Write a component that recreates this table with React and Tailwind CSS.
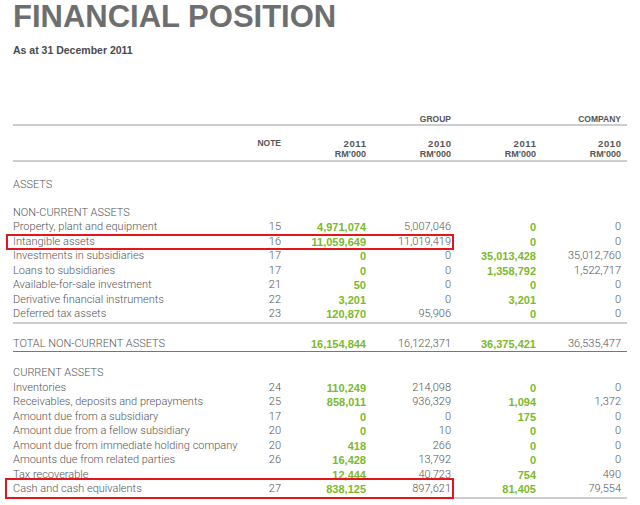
import React from "react";

const nonCurrent = [
  { label: "Property, plant and equipment", note: "15", g11: "4,971,074", g10: "5,007,046", c11: "0", c10: "0" },
  { label: "Intangible assets", note: "16", g11: "11,059,649", g10: "11,019,419", c11: "0", c10: "0", mark: "small" },
  { label: "Investments in subsidiaries", note: "17", g11: "0", g10: "0", c11: "35,013,428", c10: "35,012,760" },
  { label: "Loans to subsidiaries", note: "17", g11: "0", g10: "0", c11: "1,358,792", c10: "1,522,717" },
  { label: "Available-for-sale investment", note: "21", g11: "50", g10: "0", c11: "0", c10: "0" },
  { label: "Derivative financial instruments", note: "22", g11: "3,201", g10: "0", c11: "3,201", c10: "0" },
  { label: "Deferred tax assets", note: "23", g11: "120,870", g10: "95,906", c11: "0", c10: "0" },
];

const current = [
  { label: "Inventories", note: "24", g11: "110,249", g10: "214,098", c11: "0", c10: "0" },
  { label: "Receivables, deposits and prepayments", note: "25", g11: "858,011", g10: "936,329", c11: "1,094", c10: "1,372" },
  { label: "Amount due from a subsidiary", note: "17", g11: "0", g10: "0", c11: "175", c10: "0" },
  { label: "Amount due from a fellow subsidiary", note: "20", g11: "0", g10: "10", c11: "0", c10: "0" },
  { label: "Amount due from immediate holding company", note: "20", g11: "418", g10: "266", c11: "0", c10: "0" },
  { label: "Amounts due from related parties", note: "26", g11: "16,428", g10: "13,792", c11: "0", c10: "0" },
  { label: "Tax recoverable", note: "", g11: "12,444", g10: "40,723", c11: "754", c10: "490" },
  { label: "Cash and cash equivalents", note: "27", g11: "838,125", g10: "897,621", c11: "81,405", c10: "79,554", mark: "big" },
];

const grid = "grid grid-cols-[1fr_30px_85px_85px_85px_85px] pr-[6px]";

function Row({ r }) {
  return (
    <div className={`${grid} relative h-[14.5px] leading-[14.5px] text-[11px]`}>
      <span className="font-light text-[#555]">{r.label}</span>
      <span className="text-right font-light text-[#555]">{r.note}</span>
      <span className="text-right font-bold text-[#7cb92c] font-['Liberation_Sans']">{r.g11}</span>
      <span className="text-right font-light text-[#555]">{r.g10}</span>
      <span className="text-right font-bold text-[#7cb92c] font-['Liberation_Sans']">{r.c11}</span>
      <span className="text-right font-light text-[#555]">{r.c10}</span>
      {r.mark === "small" && (
        <span className="absolute -left-[7px] -top-[1px] w-[448px] h-[16px] border-2 border-[#e3161b]" />
      )}
      {r.mark === "big" && (
        <span className="absolute -left-[8px] -top-[4px] w-[449px] h-[21px] border-2 border-[#e3161b]" />
      )}
    </div>
  );
}

function YearHead({ year }) {
  return (
    <span className="text-right">
      <span className="block text-[9.5px] tracking-[0.6px] -mr-[0.6px]">{year}</span>
      <span className="block text-[9px]">RM'000</span>
    </span>
  );
}

export default function App() {
  return (
    <div className="w-[640px] h-[505px] bg-white overflow-hidden font-['Roboto',sans-serif]">
      <h1 className="pl-[13px] pt-[1px] text-[31px] leading-none font-bold text-[#6d6e70] font-['Liberation_Sans']">
        FINANCIAL POSITION
      </h1>
      <p className="mt-[11px] pl-[13px] text-[10.5px] leading-[14px] font-bold text-[#4a4a4a] font-['Liberation_Sans']">
        As at 31 December 2011
      </p>

      <div className="ml-[13px] w-[614px] mt-[55px]">
        {/* group headings */}
        <div className={`${grid} h-[14px] leading-[14px] text-[8.5px] font-bold text-[#555] border-b-2 border-[#cdcdcd] font-['Liberation_Sans']`}>
          <span />
          <span />
          <span />
          <span className="text-right">GROUP</span>
          <span />
          <span className="text-right">COMPANY</span>
        </div>

        {/* column headings */}
        <div className={`${grid} pt-[12px] leading-[11px] text-[8.5px] font-bold text-[#555] border-b-2 border-[#cdcdcd] font-['Liberation_Sans']`}>
          <span />
          <span className="text-right">NOTE</span>
          <YearHead year="2011" />
          <YearHead year="2010" />
          <YearHead year="2011" />
          <YearHead year="2010" />
        </div>

        <div className="mt-[16px] h-[14.5px] leading-[14.5px] text-[11px] font-light text-[#555]">ASSETS</div>

        <div className="mt-[13px] h-[14.5px] leading-[14.5px] text-[11px] font-light text-[#555]">NON-CURRENT ASSETS</div>
        <div className="border-b-2 border-[#cdcdcd]">
          {nonCurrent.map((r) => (
            <Row key={r.label} r={r} />
          ))}
        </div>

        {/* total */}
        <div className={`${grid} mt-[13px] h-[15px] leading-[14.5px] text-[11px] border-b border-[#777]`}>
          <span className="font-light text-[#555]">TOTAL NON-CURRENT ASSETS</span>
          <span />
          <span className="text-right font-bold text-[#7cb92c] font-['Liberation_Sans']">16,154,844</span>
          <span className="text-right font-light text-[#555]">16,122,371</span>
          <span className="text-right font-bold text-[#7cb92c] font-['Liberation_Sans']">36,375,421</span>
          <span className="text-right font-light text-[#555]">36,535,477</span>
        </div>

        <div className="mt-[14.5px] h-[14.5px] leading-[14.5px] text-[11px] font-light text-[#555]">CURRENT ASSETS</div>
        <div className="border-b-2 border-[#cdcdcd]">
          {current.map((r) => (
            <Row key={r.label} r={r} />
          ))}
        </div>
      </div>
    </div>
  );
}
